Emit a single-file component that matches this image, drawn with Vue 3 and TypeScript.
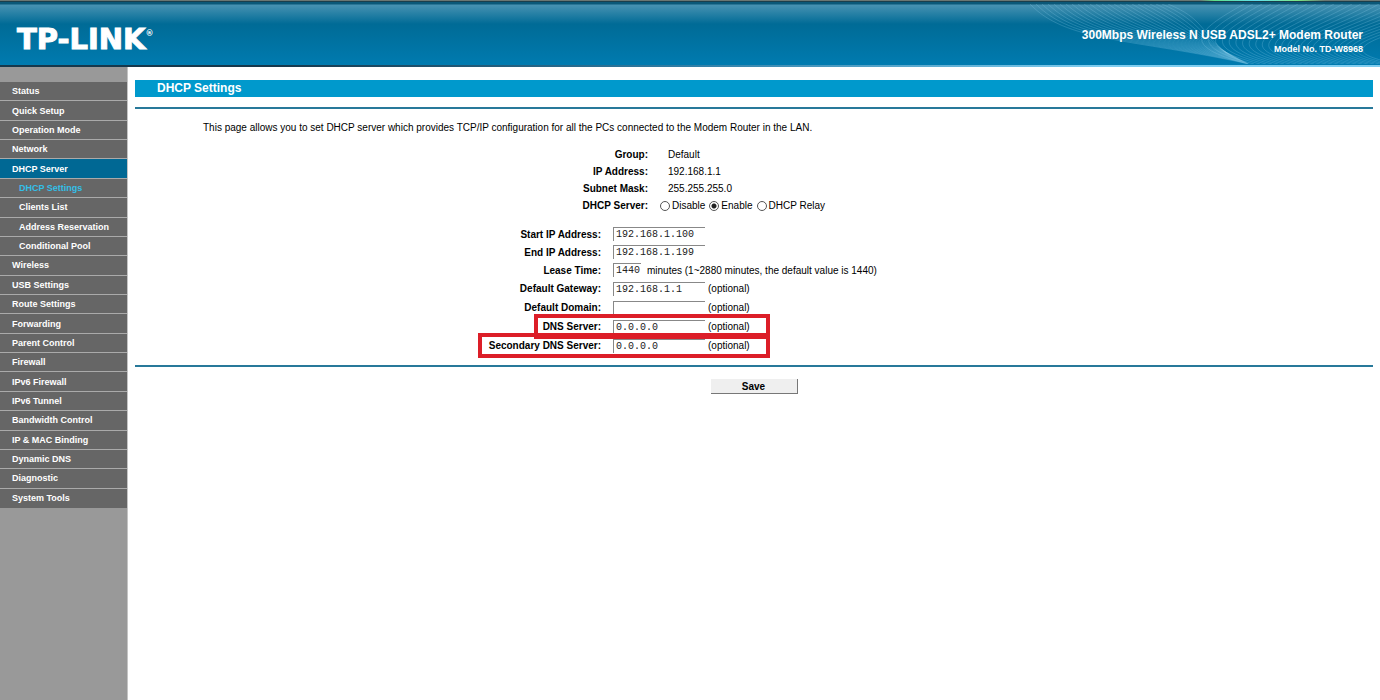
<script setup lang="ts">
import { ref } from 'vue'

interface MenuItem {
  label: string
  sub?: boolean
  state?: 'open' | 'current'
}

const menu: MenuItem[] = [
  { label: 'Status' },
  { label: 'Quick Setup' },
  { label: 'Operation Mode' },
  { label: 'Network' },
  { label: 'DHCP Server', state: 'open' },
  { label: 'DHCP Settings', sub: true, state: 'current' },
  { label: 'Clients List', sub: true },
  { label: 'Address Reservation', sub: true },
  { label: 'Conditional Pool', sub: true },
  { label: 'Wireless' },
  { label: 'USB Settings' },
  { label: 'Route Settings' },
  { label: 'Forwarding' },
  { label: 'Parent Control' },
  { label: 'Firewall' },
  { label: 'IPv6 Firewall' },
  { label: 'IPv6 Tunnel' },
  { label: 'Bandwidth Control' },
  { label: 'IP & MAC Binding' },
  { label: 'Dynamic DNS' },
  { label: 'Diagnostic' },
  { label: 'System Tools' },
]

const info = [
  { label: 'Group:', value: 'Default' },
  { label: 'IP Address:', value: '192.168.1.1' },
  { label: 'Subnet Mask:', value: '255.255.255.0' },
]

const modes = ['Disable', 'Enable', 'DHCP Relay']
const mode = ref('Enable')

const fields = ref([
  { id: 'start', label: 'Start IP Address:', value: '192.168.1.100', note: '', mark: '' },
  { id: 'end', label: 'End IP Address:', value: '192.168.1.199', note: '', mark: '' },
  { id: 'lease', label: 'Lease Time:', value: '1440', note: 'minutes (1~2880 minutes, the default value is 1440)', mark: '' },
  { id: 'gateway', label: 'Default Gateway:', value: '192.168.1.1', note: '(optional)', mark: '' },
  { id: 'domain', label: 'Default Domain:', value: '', note: '(optional)', mark: '' },
  { id: 'dns', label: 'DNS Server:', value: '0.0.0.0', note: '(optional)', mark: 'narrow' },
  { id: 'dns2', label: 'Secondary DNS Server:', value: '0.0.0.0', note: '(optional)', mark: 'wide' },
])

const leftWaves = Array.from({ length: 24 }, (_, i) => {
  const x = i * 6
  return `M${x} 0 C${x + 36} ${38 - i} ${100 + i * 3} ${34 - i / 3} ${219 - i} ${60 - i / 2}`
})
const rightWaves = Array.from({ length: 26 }, (_, i) => {
  const x = 214 + i * 9
  return `M${x} 0 C${x - 50} 28 ${150 + i * 5} 42 ${218 + i * 6} 60`
})
</script>

<template>
  <div class="page">
    <header class="banner">
      <svg class="waves" viewBox="0 0 350 60" aria-hidden="true">
        <path v-for="d in leftWaves" :key="d" :d="d" />
        <path v-for="d in rightWaves" :key="d" :d="d" />
      </svg>
      <div class="logo">TP-LINK<sup>®</sup></div>
      <div class="product">
        <div class="name">300Mbps Wireless N USB ADSL2+ Modem Router</div>
        <div class="model">Model No. TD-W8968</div>
      </div>
    </header>
    <div class="body">
      <nav class="side">
        <ul>
          <li v-for="m in menu" :key="m.label" :class="[m.state, { sub: m.sub }]">
            <a href="#">{{ m.label }}</a>
          </li>
        </ul>
      </nav>
      <main>
        <h1>DHCP Settings</h1>
        <form @submit.prevent>
          <p>This page allows you to set DHCP server which provides TCP/IP configuration for all the PCs connected to the Modem Router in the LAN.</p>
          <dl class="info">
            <div v-for="r in info" :key="r.label" class="row">
              <dt>{{ r.label }}</dt>
              <dd>{{ r.value }}</dd>
            </div>
            <div class="row">
              <dt id="mode-label">DHCP Server:</dt>
              <dd class="radios" role="radiogroup" aria-labelledby="mode-label">
                <label v-for="m in modes" :key="m"><input v-model="mode" type="radio" name="mode" :value="m" />{{ m }}</label>
              </dd>
            </div>
          </dl>
          <div class="fields">
            <div v-for="f in fields" :key="f.id" class="field">
              <label :for="f.id">{{ f.label }}</label>
              <div class="entry">
                <input :id="f.id" v-model="f.value" type="text" :class="{ short: f.id === 'lease' }" />
                <span>{{ f.note }}</span>
              </div>
              <i v-if="f.mark" class="mark" :class="f.mark"></i>
            </div>
          </div>
        </form>
        <div class="actions"><button type="button">Save</button></div>
      </main>
    </div>
  </div>
</template>

<style>
body {
  margin: 0;
  background: #fff;
}
</style>

<style scoped>
.page {
  display: flex;
  flex-direction: column;
  min-height: 100vh;
  font-family: "Liberation Sans", Arial, sans-serif;
  font-size: 10px;
  color: #000;
}
.banner {
  position: relative;
  display: flex;
  justify-content: space-between;
  box-sizing: border-box;
  height: 67px;
  padding: 2px 17px 0;
  background:
    linear-gradient(90deg, #6b7672 87%, #5fe08a 88%, #62dff0 91%, #7ce887 94%, #6b7672 96%) top / 100% 1px no-repeat,
    linear-gradient(90deg, #16384c 0 20%, #2f7ea6 50%, #7fcdf0 80%) bottom / 100% 2px no-repeat,
    linear-gradient(#1b3f4c 0 2px, #0b5878 2px 4px, #4792b2 5px, #006b96 24px, #007bb0 65px);
  color: #fff;
  font-weight: bold;
}
.waves {
  position: absolute;
  right: 0;
  top: 4px;
  width: 350px;
  height: 60px;
  fill: none;
  stroke: #8fd0ea;
  stroke-opacity: 0.25;
}
.logo {
  position: relative;
  padding-top: 21px;
  font: bold 29px/33px "DejaVu Sans", sans-serif;
  -webkit-text-stroke: 1px #fff;
}
.logo sup {
  font-size: 8px;
  line-height: 8px;
  vertical-align: 13px;
  -webkit-text-stroke: 0;
}
.product {
  position: relative;
  padding-top: 26px;
  text-align: right;
}
.name {
  font-size: 12px;
  line-height: 14px;
}
.model {
  font-size: 9px;
  line-height: 14px;
}
.body {
  display: flex;
  flex: 1;
}
.side {
  flex: none;
  box-sizing: border-box;
  width: 128px;
  padding-top: 15px;
  border-right: 1px solid #c4c4c4;
  background: #999;
}
ul {
  display: grid;
  grid-auto-rows: 1fr;
  min-height: 426px;
  margin: 0;
  padding: 0;
  list-style: none;
}
li {
  display: flex;
  align-items: center;
  padding-left: 12px;
  border-bottom: 1px solid #aaa;
  background: #666;
}
li:last-child {
  border-bottom: 0;
}
li.sub {
  padding-left: 19px;
}
li.open {
  background: #006894;
}
li a {
  color: #fff;
  font-size: 9px;
  font-weight: bold;
  text-decoration: none;
}
li.current a {
  color: #33bfe8;
}
main {
  flex: 1;
  padding: 13px 7px 0;
}
h1 {
  margin: 0 0 10px;
  padding-left: 22px;
  background: #09c;
  color: #fff;
  font-size: 12px;
  line-height: 17px;
}
form {
  padding-bottom: 10px;
  border-top: 2px solid #28799a;
  border-bottom: 2px solid #28799a;
}
p {
  margin: 0;
  padding: 12px 0 12px 68px;
  line-height: 13px;
}
.info {
  margin: 0 0 10px;
}
.row {
  display: grid;
  grid-template-columns: 513fr 705fr;
  column-gap: 20px;
  line-height: 17px;
}
.row:last-child {
  line-height: 18px;
}
dt,
.field > label {
  font-weight: bold;
  text-align: right;
}
dd {
  margin: 0;
}
.radios {
  display: flex;
  gap: 4px;
  margin-left: -8px;
}
.radios label {
  display: flex;
  align-items: center;
  gap: 2px;
}
.radios input {
  appearance: none;
  width: 10px;
  height: 10px;
  margin: 0;
  border: 1px solid #555;
  border-radius: 50%;
}
.radios input:checked {
  background: radial-gradient(circle, #222 0 2px, #fff 3px);
}
.field {
  position: relative;
  display: grid;
  grid-template-columns: 466fr 760fr;
  column-gap: 12px;
  align-items: center;
  height: 19px;
}
.field:nth-child(-n + 3) {
  height: 18px;
}
.entry {
  display: flex;
  align-items: center;
  gap: 3px;
}
.entry input {
  box-sizing: border-box;
  width: 92px;
  height: 14px;
  padding: 0 2px;
  border: solid #888;
  border-width: 1px 0 0 1px;
  background: #fff;
  color: #222;
  font: 10px "Liberation Mono", monospace;
}
.entry .short {
  width: 28px;
  padding-right: 0;
  margin-right: 3px;
}
.mark {
  position: absolute;
  top: -3px;
  right: 603px;
  box-sizing: border-box;
  width: 236px;
  height: 25px;
  border: 4px solid #dc1e28;
  pointer-events: none;
}
.mark.wide {
  width: 292px;
}
.actions {
  padding: 12px 0 0;
  text-align: center;
}
button {
  box-sizing: border-box;
  width: 87px;
  height: 15px;
  padding: 0;
  border: solid #777;
  border-width: 0 1px 1px 0;
  background: #efefef;
  color: #000;
  font: bold 10px "Liberation Sans", Arial, sans-serif;
}
</style>
